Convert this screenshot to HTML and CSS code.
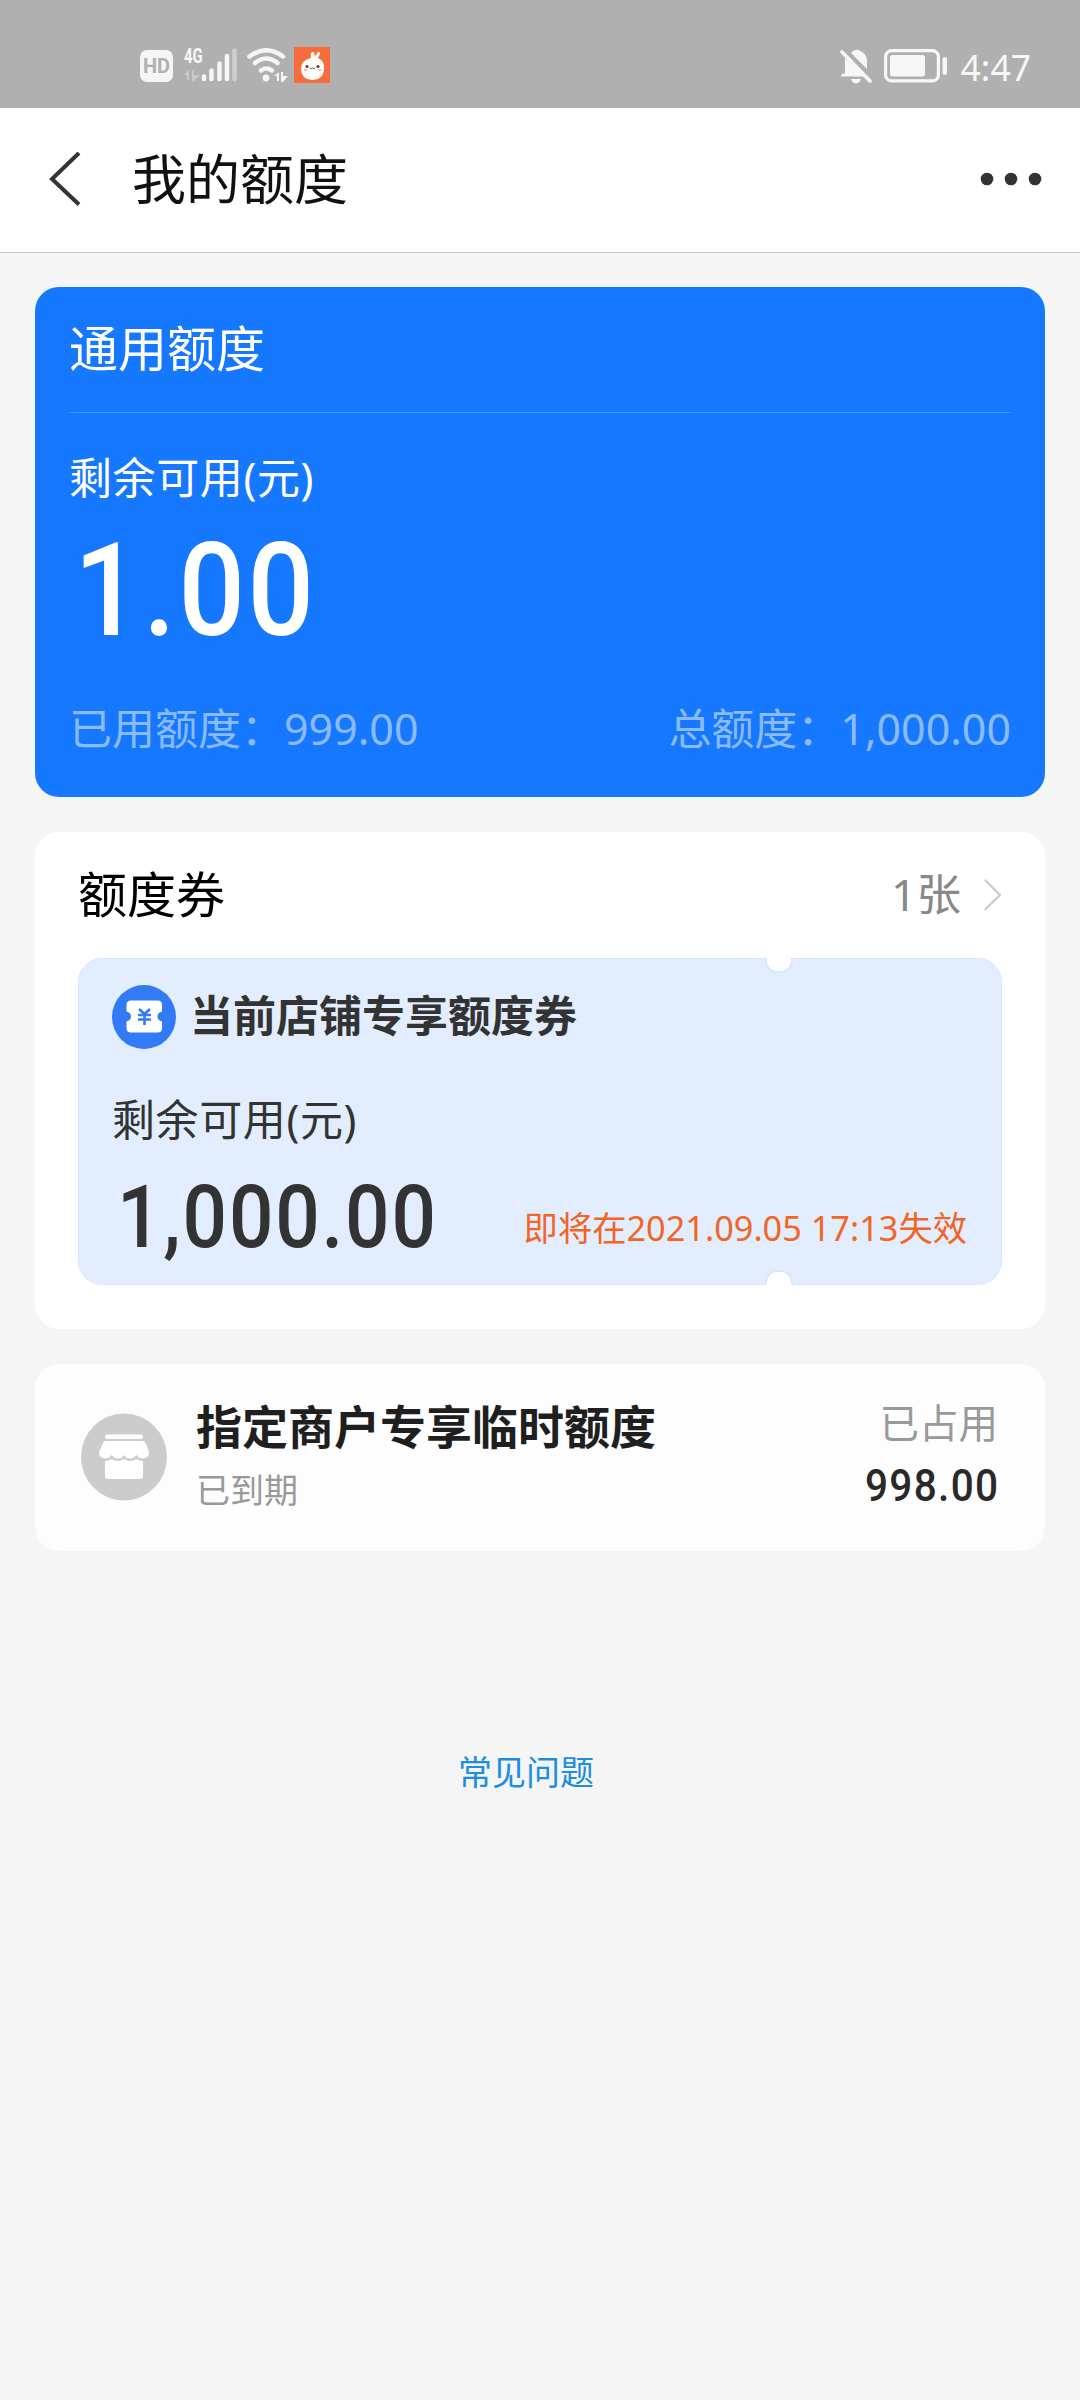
FILE: index.html
```html
<!DOCTYPE html>
<html lang="zh-CN">
<head>
<meta charset="utf-8">
<title>我的额度</title>
<link rel="stylesheet" href="styles.css">
</head>
<body>
<header class="status">
  <div class="status-left">
    <span class="hd">HD</span>
    <span class="mobile">
      <span class="network">4G</span>
      <svg width="53" height="33" viewBox="0 0 53 33" fill="#f5f5f5">
        <path d="M0 27l5-5v10H3v-5zM8 22h2v5h6l-6 6H8z" opacity=".35"/>
        <path d="M20 28.500v2.500M27.500 22.500v8.500M35.500 15.500v15.500M43 8v23" stroke="#f5f5f5" stroke-width="4.500" stroke-linecap="round"/>
        <path d="M50.500 2.500v28.500" stroke="#cfcfcf" stroke-width="4.500" stroke-linecap="round"/>
      </svg>
    </span>
    <svg class="wifi" width="41" height="34" viewBox="0 0 41 34" fill="none" stroke="#f5f5f5" stroke-width="4.500" stroke-linecap="round">
      <path d="M2.500 8.500Q19 -4 36 8.500M8 15Q19 6 30.500 15M14 22.500Q19 18.500 25 22.500"/>
      <circle cx="19" cy="30" r="3.400" fill="#f5f5f5" stroke="none"/>
      <path d="M27 28l5-4v9h-2v-5zM34 24h2v4h5l-5 6h-2z" fill="#f5f5f5" stroke="none"/>
    </svg>
    <svg class="rabbit" width="36" height="36" viewBox="0 0 36 36">
      <rect width="36" height="36" fill="#f76b3c"/>
      <path d="M17 11Q16 5 18.500 5Q21 5 20.500 10L24 5Q27 5 26 7L24 11Q31 14 30 22Q29 33 18 33Q7 32 7 22Q7 13 17 11Z" fill="#fffdf8"/>
      <g fill="#54423c"><circle cx="13" cy="19.500" r="1.600"/><circle cx="24" cy="19.500" r="1.600"/></g>
      <path d="M16 21q1.500 1.500 2.500 0q1 1.500 2.500 0" fill="none" stroke="#54423c"/>
      <path d="M10 23h3M24.500 23h3" stroke="#f4a6a0" stroke-width="1.500"/>
    </svg>
  </div>
  <div class="status-right">
    <svg width="33" height="36" viewBox="0 0 33 36" fill="#f7f7f7">
      <path d="M11 4Q16 -2 22 3Q27 6 27 12V20ZM5 9L24 27.500H1Q0 26 5 24ZM11 30h10q-2 4.500-5 4.500T11 30Z"/>
      <path d="M2 3L30 32" stroke="#f7f7f7" stroke-width="3.600" stroke-linecap="round"/>
    </svg>
    <svg class="battery" width="64" height="34" viewBox="0 0 64 34">
      <rect x="1.600" y="1.600" width="52.800" height="30.300" rx="6" fill="none" stroke="#f7f7f7" stroke-width="3.200"/>
      <rect x="6" y="6" width="35" height="21.500" rx="2.500" fill="#f7f7f7"/>
      <rect x="58.500" y="8" width="4.500" height="18" rx="2" fill="#f7f7f7"/>
    </svg>
    <time>4:47</time>
  </div>
</header>

<nav class="nav">
  <svg class="back" width="32" height="54" viewBox="0 0 32 54" fill="none" stroke="#333" stroke-width="4"><path d="M30 1L3 27L30 52.500"/></svg>
  <h1>我的额度</h1>
  <svg class="more" width="62" height="14" viewBox="0 0 62 14" fill="#333"><circle cx="7" cy="7" r="6.300"/><circle cx="31" cy="7" r="6.300"/><circle cx="55" cy="7" r="6.300"/></svg>
</nav>

<main>
  <section class="card quota">
    <h2>通用额度</h2>
    <p class="label">剩余可用(元)</p>
    <p class="din quota-amount">1.00</p>
    <div class="quota-foot"><span>已用额度：999.00</span><span>总额度：1,000.00</span></div>
  </section>

  <section class="card coupons">
    <div class="coupons-head">
      <h2>额度券</h2>
      <span class="count">1张</span>
      <svg width="18" height="32" viewBox="0 0 18 32" fill="none" stroke="#ccc" stroke-width="2.400" stroke-linecap="round" stroke-linejoin="round"><path d="M1.500 1.500L16 16L1.500 30"/></svg>
    </div>
    <div class="ticket">
      <div class="ticket-title">
        <svg width="64" height="64" viewBox="0 0 64 64">
          <circle cx="32" cy="32" r="32" fill="#327af6"/>
          <path d="M19 15.500H46Q50 15.500 50 20V26.500Q45.500 27.500 45.500 31.500T50 36.500V43Q50 47.500 46 47.500H19Q14.500 47.500 14.500 43V36.500Q19 35.500 19 31.500T14.500 26.500V20Q14.500 15.500 19 15.500Z" fill="#fff"/>
          <path d="M27 24L32.500 29L38 24M26 30H39M26 34.500H39M32.500 29V40" fill="none" stroke="#327af6" stroke-width="2.600"/>
        </svg>
        <h3>当前店铺专享额度券</h3>
      </div>
      <p class="label">剩余可用(元)</p>
      <div class="ticket-foot">
        <span class="din ticket-amount">1,000.00</span>
        <span class="expiry">即将在2021.09.05 17:13失效</span>
      </div>
    </div>
  </section>

  <section class="card merchant">
    <svg width="86" height="88" viewBox="0 0 86 88">
      <ellipse cx="43" cy="44" rx="43" ry="43.500" fill="#ccc"/>
      <g fill="#fff">
        <rect x="24" y="21.500" width="38" height="4.500" rx="2.200"/>
        <path d="M25 28H61Q64 28 65 31L68 39Q68 45.500 62 45.500Q58 45.500 55.500 42Q53 45.500 49 45.500Q45 45.500 43 42Q41 45.500 37 45.500Q33 45.500 30.500 42Q28 45.500 24 45.500Q18 45.500 18 39L21.500 31Q22 28 25 28Z"/>
        <path d="M24 48Q28 48 30.500 46Q37 50 43 46Q49 50 55.500 46Q58 48 62 48V63Q62 66 59 66H27Q24 66 24 63Z"/>
      </g>
    </svg>
    <div class="merchant-info"><h3>指定商户专享临时额度</h3><p>已到期</p></div>
    <div class="merchant-used"><p>已占用</p><strong class="din">998.00</strong></div>
  </section>
</main>
<a class="faq">常见问题</a>
</body>
</html>
```
FILE: styles.css
```css
* { box-sizing: border-box; }
body {
  margin: 0;
  min-height: 2400px;
  background: #f5f5f5;
  color: #333;
  font-family: "Noto Sans", "Noto Sans CJK SC", sans-serif;
}
h1, h2, h3, p { margin: 0; font-weight: 400; white-space: nowrap; }
svg { display: block; flex: none; }
.din { font-family: Roboto, sans-serif; font-weight: 500; white-space: nowrap; transform: scaleX(.9); transform-origin: left; }

.status {
  height: 108px;
  padding: 47px 49px 0 140px;
  display: flex;
  justify-content: space-between;
  background: #b0b0b0;
  color: #f7f7f7;
}
.status-left, .status-right { display: flex; align-items: flex-start; }
.hd {
  width: 33px; height: 32px; margin-top: 3px;
  border-radius: 7px;
  background: #f5f5f5; color: #b0b0b0;
  font: 700 20px/33px Roboto, sans-serif;
  text-align: center;
}
.mobile { position: relative; margin: 1px 0 0 11px; }
.network { position: absolute; left: 0; top: -1px; font: 700 20px/18px Roboto, sans-serif; transform: scaleX(.75); transform-origin: left; }
.wifi { margin: 1px 0 0 10px; }
.rabbit { margin-left: 6px; }
.status-right svg { margin-top: 2px; }
.status-right .battery { margin-left: 11px; }
time { margin-left: 13px; font-size: 35.500px; line-height: 40px; }

.nav {
  height: 145px;
  padding: 0 38px 2px 49px;
  display: flex;
  align-items: center;
  background: #fff;
  border-bottom: 1px solid #c8c8c8;
}
.nav h1 { margin-left: 51px; font-size: 54px; line-height: 70px; color: #111; }
.more { margin-left: auto; }

main { padding: 34px 35px 0; display: flex; flex-direction: column; gap: 35px; }
.card { border-radius: 24px; background: #fff; }
.label { font-size: 43px; line-height: 50px; letter-spacing: .6px; }

.quota { height: 510px; padding: 0 34px; background: #1677ff; color: #fff; }
.quota h2 { height: 126px; font-size: 49px; line-height: 122px; border-bottom: 1px solid #4593ff; }
.quota .label { margin-top: 40px; }
.quota-amount { margin: 23px 0 0 5px; font-size: 130px; line-height: 130px; letter-spacing: 3px; }
.quota-foot { margin-top: 43px; display: flex; justify-content: space-between; font-size: 43px; line-height: 60px; color: #8bbbff; }

.coupons { height: 497px; padding: 0 43px; }
.coupons-head { height: 126px; display: flex; align-items: center; }
.coupons-head h2 { margin-bottom: 3px; font-size: 49px; line-height: 60px; color: #000; }
.count { margin: 0 23px 2px auto; font-size: 44.500px; line-height: 60px; color: #888; }
.ticket {
  position: relative;
  height: 327px;
  padding: 26px 34px 0 33px;
  border: 1px solid #d7e8fc;
  border-radius: 24px;
  background: #e2eeff;
}
.ticket::before, .ticket::after {
  content: "";
  position: absolute;
  left: 686px;
  width: 24px; height: 13px;
  background: #fff;
  border: 2px solid #d7e8fc;
}
.ticket::before { top: -1px; border-top: 0; border-radius: 0 0 12px 12px; }
.ticket::after { bottom: -1px; border-bottom: 0; border-radius: 12px 12px 0 0; }
.ticket-title { display: flex; align-items: center; gap: 14px; }
.ticket-title h3 { margin-bottom: 2px; font-size: 43px; line-height: 60px; font-weight: 700; }
.ticket .label { margin-top: 46px; }
.ticket-foot { margin-top: 26px; display: flex; justify-content: space-between; align-items: flex-start; }
.ticket-amount { margin-left: 5px; font-size: 87px; line-height: 92px; letter-spacing: 2px; }
.expiry { margin-top: 35px; font-size: 34.300px; line-height: 44px; color: #f26522; white-space: nowrap; }

.merchant { height: 187px; padding: 0 47px 2px 46px; display: flex; align-items: center; background: #fdfdfd; }
.merchant-info { margin-left: 29px; }
.merchant-info h3 { font-size: 46px; line-height: 66px; font-weight: 700; color: #1f1f1f; }
.merchant-info p { font-size: 34px; line-height: 62px; color: #999; }
.merchant-used { margin-left: auto; text-align: right; }
.merchant-used p { font-size: 39.500px; line-height: 58px; color: #999; }
.merchant-used strong { display: block; margin-right: -1px; font-size: 45px; line-height: 68px; letter-spacing: 1.500px; transform-origin: right; color: #292929; }

.faq { display: block; width: 1052px; margin-top: 196px; text-align: center; font-size: 34px; line-height: 50px; color: #1c8de0; }
```
